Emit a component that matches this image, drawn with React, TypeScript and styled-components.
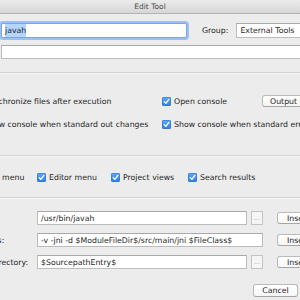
import React from 'react';
import styled, { createGlobalStyle } from 'styled-components';

const GlobalStyle = createGlobalStyle`
  html, body {
    margin: 0;
    padding: 0;
    width: 300px;
    height: 300px;
    overflow: hidden;
    background: #ececec;
  }
  body {
    font-family: "DejaVu Sans", "Liberation Sans", sans-serif;
    font-size: 7.8px;
    color: #1f1f1f;
  }
`;

const Window = styled.div`
  width: 300px;
  height: 300px;
  overflow: hidden;
  display: flex;
  flex-direction: column;
`;

const TitleBar = styled.div`
  height: 13px;
  flex: none;
  display: flex;
  align-items: center;
  justify-content: center;
  background: linear-gradient(#ebebeb, #d6d6d6);
  border-bottom: 1px solid #b3b3b3;
  color: #4a4a4a;
  font-size: 7.5px;
`;

const Row = styled.div<{ top: number }>`
  display: flex;
  align-items: center;
  margin-top: ${(p) => p.top}px;
  white-space: nowrap;
`;

const Field = styled.div<{ width?: number; focused?: boolean }>`
  box-sizing: border-box;
  height: 15px;
  ${(p) => (p.width ? `width: ${p.width}px; flex: none;` : 'flex: 1;')}
  background: #fff;
  border: 1px solid ${(p) => (p.focused ? '#7ea6dd' : '#bcbcbc')};
  border-top-color: ${(p) => (p.focused ? '#7ea6dd' : '#a9a9a9')};
  box-shadow: ${(p) => (p.focused ? '0 0 0 2px #9cc0f2' : 'none')};
  border-radius: ${(p) => (p.focused ? '2px' : '0')};
  display: flex;
  align-items: center;
  padding-left: 3px;
  white-space: nowrap;
  overflow: hidden;
`;

const Selected = styled.span`
  background: #b5d5fd;
  padding: 1px 0;
  line-height: 11px;
`;

const Label = styled.span<{ left?: number }>`
  margin-left: ${(p) => p.left ?? 0}px;
  color: #262626;
`;

const Separator = styled.div<{ top: number }>`
  margin-top: ${(p) => p.top}px;
  height: 1px;
  background: #d3d3d3;
  border-bottom: 1px solid #f6f6f6;
`;

const OptionsGrid = styled.div`
  display: grid;
  grid-template-columns: 190px 100px auto;
  row-gap: 11px;
  align-items: center;
  margin-left: -28px;
  margin-top: 21px;
  white-space: nowrap;
`;

const MenuGrid = styled.div`
  display: grid;
  grid-template-columns: 68px 74px 77px auto;
  align-items: center;
  margin-left: -31px;
  margin-top: 14px;
  white-space: nowrap;
`;

const Check = styled.label`
  display: flex;
  align-items: center;
  gap: 3px;
  height: 12px;
`;

const Box = styled.span`
  width: 9px;
  height: 9px;
  flex: none;
  border-radius: 2px;
  background: linear-gradient(#62a9f8, #2c7fe6);
  box-shadow: inset 0 0 0 0.5px #2a6fc9;
  display: flex;
  align-items: center;
  justify-content: center;
`;

const Button = styled.div<{ width?: number; pad?: number }>`
  box-sizing: border-box;
  height: 12px;
  ${(p) => (p.width ? `width: ${p.width}px;` : '')}
  background: linear-gradient(#ffffff, #f6f6f6);
  border: 1px solid #bababa;
  border-bottom-color: #a6a6a6;
  border-radius: 3px;
  display: flex;
  align-items: center;
  padding: 0 ${(p) => p.pad ?? 9}px;
  white-space: nowrap;
  color: #1f1f1f;
`;

const ToolGrid = styled.div`
  display: grid;
  grid-template-columns: 76px 210px 12px auto;
  column-gap: 4px;
  row-gap: 8px;
  align-items: center;
  margin-left: -43px;
  margin-top: 12px;
  white-space: nowrap;
`;

const Browse = styled.div`
  box-sizing: border-box;
  width: 12px;
  height: 14px;
  border: 1px solid #c4c4c4;
  background: #f5f5f5;
  color: #9a9a9a;
  font-size: 6px;
  display: flex;
  align-items: flex-end;
  justify-content: center;
  padding-bottom: 4px;
  line-height: 4px;
`;

const InsertCell = styled.div`
  margin-left: 10px;
`;

const Footer = styled.div`
  display: flex;
  justify-content: flex-end;
  padding-right: 2px;
  margin-top: 15px;
`;

const CheckMark = () => (
  <svg width="7" height="7" viewBox="0 0 7 7">
    <path d="M1.2 3.6 L2.9 5.3 L5.9 1.4" fill="none" stroke="#fff" strokeWidth="1.3" strokeLinecap="round" strokeLinejoin="round" />
  </svg>
);

const CheckItem: React.FC<{ text: string }> = ({ text }) => (
  <Check>
    <Box>
      <CheckMark />
    </Box>
    <span>{text}</span>
  </Check>
);

export default function App() {
  return (
    <Window>
      <GlobalStyle />
      <TitleBar>Edit Tool</TitleBar>

      <Row top={9}>
        <Field width={186} focused style={{ marginLeft: 1 }}>
          <Selected>javah</Selected>
        </Field>
        <Label left={15}>Group:</Label>
        <Field style={{ marginLeft: 8, marginRight: -20 }}>External Tools</Field>
      </Row>

      <Row top={7}>
        <Field style={{ marginLeft: 1, marginRight: -10, height: 14 }} />
      </Row>

      <Separator top={13} />

      <OptionsGrid>
        <CheckItem text="Synchronize files after execution" />
        <CheckItem text="Open console" />
        <Button pad={7}>Output Filters...</Button>
        <CheckItem text="Show console when standard out changes" />
        <CheckItem text="Show console when standard error changes" />
        <span />
      </OptionsGrid>

      <Separator top={25} />

      <MenuGrid>
        <CheckItem text="Main menu" />
        <CheckItem text="Editor menu" />
        <CheckItem text="Project views" />
        <CheckItem text="Search results" />
      </MenuGrid>

      <Separator top={14} />

      <ToolGrid>
        <Label>Program:</Label>
        <Field style={{ height: 14 }}>/usr/bin/javah</Field>
        <Browse>...</Browse>
        <InsertCell>
          <Button>Insert macro...</Button>
        </InsertCell>

        <Label>Parameters:</Label>
        <Field style={{ height: 14, gridColumn: 'span 2' }}>-v -jni -d $ModuleFileDir$/src/main/jni $FileClass$</Field>
        <InsertCell>
          <Button>Insert macro...</Button>
        </InsertCell>

        <Label>Working directory:</Label>
        <Field style={{ height: 14 }}>$SourcepathEntry$</Field>
        <Browse>...</Browse>
        <InsertCell>
          <Button>Insert macro...</Button>
        </InsertCell>
      </ToolGrid>

      <Footer>
        <Button width={45} style={{ height: 13, justifyContent: 'center', padding: 0 }}>Cancel</Button>
      </Footer>
    </Window>
  );
}
